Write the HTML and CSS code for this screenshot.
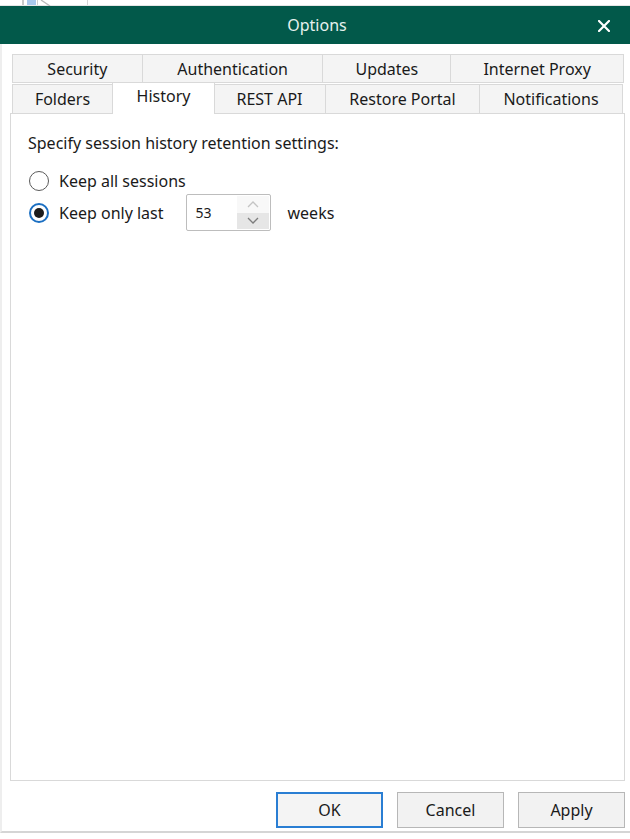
FILE: index.html
```html
<!DOCTYPE html>
<html>
<head>
<meta charset="utf-8">
<title>Options</title>
<link rel="stylesheet" href="styles.css">
</head>
<body>
<div class="bgstrip">
  <span class="bg-line"></span>
  <span class="bg-blue"></span>
  <span class="bg-line2"></span>
  <svg class="bg-diag" width="16" height="6" viewBox="0 0 16 6"><path d="M1 0 L10 6" stroke="#b9b9b9" stroke-width="1.3" fill="none"/></svg>
  <span class="bg-line3"></span>
</div>
<div class="titlebar">
  <span class="title">Options</span>
  <span class="close" aria-label="Close">
    <svg width="12" height="12" viewBox="0 0 12 12"><path d="M1 1 L11 11 M11 1 L1 11" stroke="#ffffff" stroke-width="2.2" stroke-linecap="square" fill="none"/></svg>
  </span>
</div>
<div class="window">
  <div class="tabs">
    <div class="tabrow back">
      <div class="tab t-security">Security</div>
      <div class="tab t-auth">Authentication</div>
      <div class="tab t-updates">Updates</div>
      <div class="tab t-proxy">Internet Proxy</div>
    </div>
    <div class="tabrow front">
      <div class="tab t-folders">Folders</div>
      <div class="tab t-history selected">History</div>
      <div class="tab t-rest">REST API</div>
      <div class="tab t-portal">Restore Portal</div>
      <div class="tab t-notif">Notifications</div>
    </div>
  </div>
  <div class="panel">
    <div class="caption">Specify session history retention settings:</div>
    <div class="option row-all">
      <span class="radio"></span>
      <span class="label">Keep all sessions</span>
    </div>
    <div class="option row-last">
      <span class="radio checked"><span class="dot"></span></span>
      <span class="label">Keep only last</span>
      <div class="spinner">
        <span class="value">53</span>
        <div class="spin">
          <span class="spin-up"><svg width="12" height="7" viewBox="0 0 12 7"><path d="M1 6 L6 1 L11 6" stroke="#c4c4c4" stroke-width="1.3" fill="none"/></svg></span>
          <span class="spin-down"><svg width="12" height="7" viewBox="0 0 12 7"><path d="M1 1 L6 6 L11 1" stroke="#7d7d7d" stroke-width="1.3" fill="none"/></svg></span>
        </div>
      </div>
      <span class="label weeks">weeks</span>
    </div>
  </div>
  <div class="buttons">
    <button class="btn default">OK</button>
    <button class="btn">Cancel</button>
    <button class="btn">Apply</button>
  </div>
</div>
</body>
</html>
```

FILE: styles.css
```css
* { box-sizing: border-box; }
html, body {
  margin: 0;
  padding: 0;
  background: #ffffff;
}
body {
  width: 630px;
  height: 839px;
  overflow: hidden;
  font-family: "Noto Sans", "Open Sans", sans-serif;
  font-size: 16px;
  color: #1a1a1a;
}

/* background app strip */
.bgstrip {
  height: 6px;
  display: flex;
  align-items: stretch;
  border-bottom: 1px solid #e6e6e6;
}
.bg-line { width: 2px; margin-left: 22px; background: #c9c9c9; }
.bg-blue { width: 9px; margin-left: 3px; background: #a9c8ec; }
.bg-line2 { width: 1px; margin-left: 1px; background: #d0d0d0; }
.bg-diag { margin-left: 2px; }
.bg-line3 { width: 1px; margin-left: 31px; background: #d6d6d6; }

/* title bar */
.titlebar {
  height: 38px;
  background: #02594a;
  display: grid;
  grid-template-columns: 1fr auto 1fr;
  align-items: center;
  color: #e6f1ee;
}
.title {
  grid-column: 2;
  font-size: 16px;
  padding-left: 4px;
}
.close {
  grid-column: 3;
  justify-self: end;
  margin-right: 20px;
  display: flex;
  margin-top: 1px;
}

/* window body */
.window {
  height: 789px;
  border-left: 2px solid #eeeeee;
  border-bottom: 2px solid #d5d5d5;
  padding: 10px 5px 3px 8px;
  display: flex;
  flex-direction: column;
}

.tabs {
  padding-left: 2px;
  padding-right: 1px;
  position: relative;
  z-index: 2;
}
.tabrow {
  display: flex;
}
.tabrow.back { height: 29px; }
.tabrow.front { height: 30px; align-items: flex-end; }

.tab {
  display: flex;
  align-items: center;
  justify-content: center;
  background: #f4f4f4;
  border: 1px solid #d9d9d9;
  margin-left: -1px;
  color: #1a1a1a;
  white-space: nowrap;
}
.tab:first-child { margin-left: 0; }
.back .tab { height: 29px; padding-top: 1px; }
.front .tab { height: 29px; border-bottom: none; }
.front .tab.selected {
  height: 32px;
  margin-bottom: -1px;
  background: #ffffff;
  padding-bottom: 5px;
  position: relative;
  z-index: 3;
  margin-right: -1px;
}

.t-security { width: 131px; }
.t-auth { width: 182px; }
.t-updates { width: 129px; }
.t-proxy { width: 174px; }
.t-folders { width: 101px; }
.t-history { width: 103px; }
.t-rest { width: 113px; }
.t-portal { width: 155px; }
.t-notif { width: 144px; }

/* panel */
.panel {
  height: 668px;
  border: 1px solid #d9d9d9;
  background: #ffffff;
  padding: 19px 0 0 17px;
  position: relative;
  z-index: 1;
}
.caption {
  line-height: 20px;
  height: 20px;
}
.option {
  display: flex;
  align-items: center;
}
.row-all {
  margin-top: 18px;
  height: 20px;
}
.row-last {
  margin-top: 3px;
  height: 37px;
}
.radio {
  width: 20px;
  height: 20px;
  border-radius: 50%;
  border: 1px solid #5a5a5a;
  margin-left: 1px;
  display: flex;
  align-items: center;
  justify-content: center;
  flex: none;
}
.radio.checked {
  border: 2px solid #1b6fc2;
}
.radio .dot {
  width: 10px;
  height: 10px;
  border-radius: 50%;
  background: #1c1c1c;
}
.label {
  margin-left: 10px;
  line-height: 20px;
}

.spinner {
  margin-left: 22px;
  width: 85px;
  height: 37px;
  border: 1px solid #bdbdbd;
  border-radius: 2px;
  display: flex;
  align-items: stretch;
}
.spinner .value {
  flex: 1;
  display: flex;
  align-items: center;
  padding-left: 9px;
  font-size: 14px;
}
.spin {
  width: 33px;
  display: flex;
  flex-direction: column;
  padding: 1px 1px 1px 0;
}
.spin span {
  flex: 1;
  display: flex;
  align-items: center;
  justify-content: center;
}
.spin-up { background: #f8f8f8; }
.spin-down { background: #e6e6e6; }

.weeks { margin-left: 17px; }

/* buttons */
.buttons {
  margin-top: 11px;
  display: flex;
  justify-content: flex-end;
  gap: 14px;
}
.btn {
  width: 107px;
  height: 36px;
  font-family: "Noto Sans", "Open Sans", sans-serif;
  font-size: 16px;
  color: #1a1a1a;
  background: #f2f2f2;
  border: 1px solid #b7b7b7;
  border-radius: 0;
  padding: 0;
}
.btn.default {
  border: 2px solid #2a7ed3;
  background: #f4f4f4;
}
```
